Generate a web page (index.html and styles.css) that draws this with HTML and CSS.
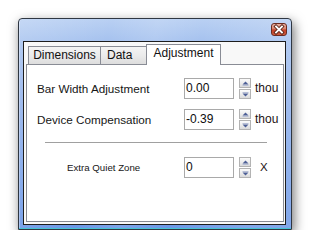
FILE: index.html
```html
<!DOCTYPE html>
<html>
<head>
<meta charset="utf-8">
<link rel="stylesheet" href="styles.css">
</head>
<body>
<div class="window">
  <div class="titlebar">
    <div class="close">
      <svg width="14" height="11" viewBox="0 0 14 11">
        <path d="M4 2.5 L10 8.5 M10 2.5 L4 8.5" stroke="#5a2418" stroke-width="3.6" stroke-linecap="square" fill="none"/>
        <path d="M4 2.5 L10 8.5 M10 2.5 L4 8.5" stroke="#ffffff" stroke-width="1.8" stroke-linecap="square" fill="none"/>
      </svg>
    </div>
  </div>
  <div class="client">
    <div class="tabs">
      <div class="tab tab-dim">Dimensions</div>
      <div class="tab tab-data">Data</div>
      <div class="tab tab-active">Adjustment</div>
    </div>
    <div class="panel">
      <div class="row">
        <div class="label">Bar Width Adjustment</div>
        <div class="field">0.00</div>
        <div class="spin">
          <div class="spin-btn"><svg width="7" height="5" viewBox="0 0 7 5"><path d="M3.5 0.5 L6.5 3.5 L0.5 3.5 Z" fill="#4d5f96"/><path d="M0.5 4.5 H6.5" stroke="#b7bfd6" stroke-width="1"/></svg></div>
          <div class="spin-btn"><svg width="7" height="5" viewBox="0 0 7 5"><path d="M0.5 0.5 H6.5" stroke="#b7bfd6" stroke-width="1"/><path d="M0.5 1.5 L6.5 1.5 L3.5 4.5 Z" fill="#4d5f96"/></svg></div>
        </div>
        <div class="unit">thou</div>
      </div>
      <div class="row row-gap">
        <div class="label">Device Compensation</div>
        <div class="field">-0.39</div>
        <div class="spin">
          <div class="spin-btn"><svg width="7" height="5" viewBox="0 0 7 5"><path d="M3.5 0.5 L6.5 3.5 L0.5 3.5 Z" fill="#4d5f96"/><path d="M0.5 4.5 H6.5" stroke="#b7bfd6" stroke-width="1"/></svg></div>
          <div class="spin-btn"><svg width="7" height="5" viewBox="0 0 7 5"><path d="M0.5 0.5 H6.5" stroke="#b7bfd6" stroke-width="1"/><path d="M0.5 1.5 L6.5 1.5 L3.5 4.5 Z" fill="#4d5f96"/></svg></div>
        </div>
        <div class="unit">thou</div>
      </div>
      <div class="sep"></div>
      <div class="row row-small">
        <div class="label label-small">Extra Quiet Zone</div>
        <div class="field">0</div>
        <div class="spin">
          <div class="spin-btn"><svg width="7" height="5" viewBox="0 0 7 5"><path d="M3.5 0.5 L6.5 3.5 L0.5 3.5 Z" fill="#4d5f96"/><path d="M0.5 4.5 H6.5" stroke="#b7bfd6" stroke-width="1"/></svg></div>
          <div class="spin-btn"><svg width="7" height="5" viewBox="0 0 7 5"><path d="M0.5 0.5 H6.5" stroke="#b7bfd6" stroke-width="1"/><path d="M0.5 1.5 L6.5 1.5 L3.5 4.5 Z" fill="#4d5f96"/></svg></div>
        </div>
        <div class="unit unit-x">X</div>
      </div>
    </div>
  </div>
</div>
</body>
</html>
```
FILE: styles.css
```css
html, body {
  margin: 0;
  padding: 0;
  background: #ffffff;
}

body {
  font-family: "Liberation Sans", Arial, sans-serif;
  color: #151515;
}

.window {
  margin: 18px 0 0 18px;
  width: 274px;
  height: 212px;
  box-sizing: border-box;
  border: 1px solid #2f3742;
  border-radius: 4px 4px 0 0;
  padding: 0 5px 4px 4px;
  display: flex;
  flex-direction: column;
  background:
    linear-gradient(100deg, rgba(255,255,255,0.18) 0%, rgba(255,255,255,0) 30%, rgba(255,255,255,0.12) 45%, rgba(255,255,255,0) 60%, rgba(255,255,255,0.15) 85%),
    linear-gradient(180deg, #b9d0f3 0%, #a3c0ee 12%, #8fb0eb 40%, #7aa2e9 75%, #6b97e7 100%);
  box-shadow: inset 0 -1px 0 #45c3d6, inset 1px 0 0 rgba(255,255,255,0.35), 2px 4px 12px rgba(0,0,0,0.55);
}

.titlebar {
  height: 22px;
  display: flex;
  justify-content: flex-end;
  align-items: flex-start;
}

.close {
  margin-top: 4px;
  margin-right: -1px;
  width: 16px;
  height: 13px;
  box-sizing: border-box;
  border: 1px solid #6d2c20;
  border-radius: 3px;
  background: linear-gradient(180deg, #eab0a2 0%, #dc8a74 40%, #c4432a 55%, #cf5a3c 100%);
  display: flex;
  align-items: center;
  justify-content: center;
}

.close svg {
  display: block;
}

.client {
  flex: 1;
  border: 1px solid #1d1d1d;
  background: #f8f8f8;
  padding: 2px 1px 2px 2px;
  display: flex;
  flex-direction: column;
  min-height: 0;
}

.tabs {
  height: 20px;
  display: flex;
  align-items: flex-end;
  margin-left: 2px;
  position: relative;
  z-index: 1;
}

.tab {
  box-sizing: border-box;
  height: 18px;
  border: 1px solid #898c95;
  border-bottom: none;
  background: linear-gradient(180deg, #f4f4f4 0%, #ebebeb 50%, #dddddd 100%);
  font-size: 12px;
  line-height: 17px;
  text-align: center;
  color: #111111;
}

.tab-dim {
  width: 73px;
}

.tab-data {
  width: 48px;
  margin-left: -1px;
  text-align: left;
  padding-left: 6px;
}

.tab-active {
  width: 75px;
  height: 21px;
  margin-left: -2px;
  margin-bottom: -1px;
  background: #ffffff;
  line-height: 17px;
  padding-bottom: 3px;
}

.panel {
  flex: 1;
  border: 1px solid #898c95;
  background: #ffffff;
  padding: 13px 0 0 10px;
}

.row {
  display: flex;
  align-items: center;
  height: 21px;
}

.row-gap {
  margin-top: 10px;
}

.row-small {
  margin-top: 14px;
}

.label {
  width: 147px;
  font-size: 11.7px;
  line-height: 21px;
  color: #161616;
  white-space: nowrap;
}

.label-small {
  font-size: 9.7px;
  padding-left: 30px;
  box-sizing: border-box;
}

.field {
  width: 50px;
  height: 21px;
  box-sizing: border-box;
  border: 1px solid #a9a9a9;
  padding-left: 1px;
  font-size: 12px;
  line-height: 19px;
  color: #0d0d0d;
}

.spin {
  margin-left: 5px;
  width: 12px;
  height: 21px;
  display: flex;
  flex-direction: column;
  justify-content: space-between;
}

.spin-btn {
  height: 10px;
  box-sizing: border-box;
  border: 1px solid #b3b3b3;
  background: linear-gradient(180deg, #fbfbfb 0%, #ededed 50%, #dadada 100%);
  display: flex;
  align-items: center;
  justify-content: center;
}

.spin-btn svg {
  display: block;
}

.unit {
  margin-left: 4px;
  font-size: 12px;
  line-height: 21px;
  color: #1c1212;
}

.unit-x {
  margin-left: 9px;
  font-size: 11.5px;
}

.sep {
  margin: 12px 0 0 8px;
  width: 222px;
  height: 1px;
  background: #a0a0a0;
}
```
